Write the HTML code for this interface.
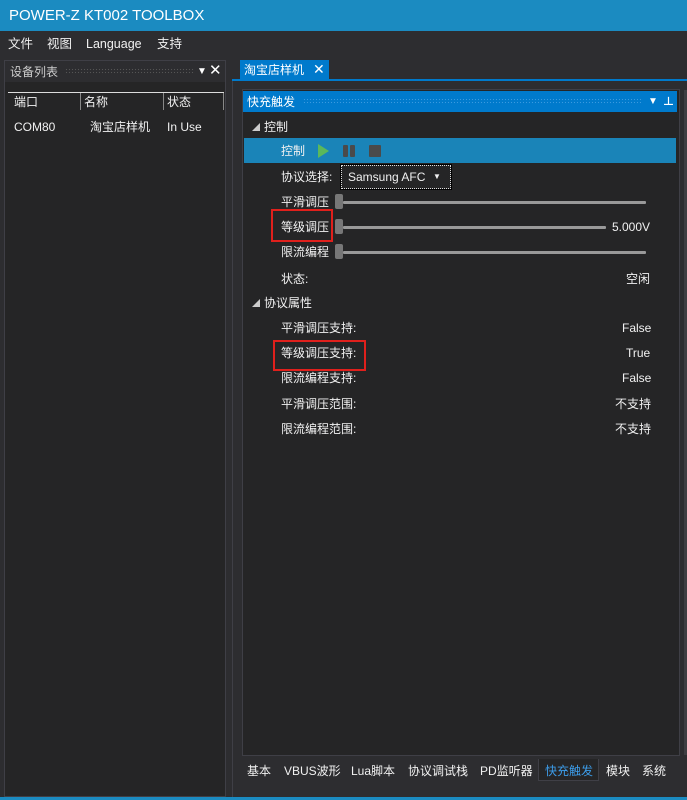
<!DOCTYPE html><html><head><meta charset="utf-8"><style>
*{margin:0;padding:0;box-sizing:border-box}
body{width:687px;height:800px;background:#2d2d30;position:relative;overflow:hidden;font-family:"Liberation Sans","Noto Sans CJK SC",sans-serif;font-size:12px;line-height:16px;color:#f1f1f1}
.a{position:absolute;white-space:nowrap}
.grip{background-image:radial-gradient(#555 0.6px,transparent 0.8px);background-size:3px 3px}
.gripb{background-image:radial-gradient(#3a9ae0 0.6px,transparent 0.8px);background-size:3px 3px}
.tr{position:absolute;height:3px;background:#999;border-radius:1px}
.th{position:absolute;width:8px;height:15px;background:#777;border-radius:2px}
</style></head><body>
<div class="a" style="left:0;top:0;width:687px;height:31px;background:#1b8bc1"></div>
<div class="a" style="left:9px;top:7px;font-size:15px;line-height:18px;color:#fff">POWER-Z KT002 TOOLBOX</div>
<div class="a" style="left:8px;top:36px;font-size:12.5px">文件</div>
<div class="a" style="left:47px;top:36px;font-size:12.5px">视图</div>
<div class="a" style="left:86px;top:36px;font-size:12.5px">Language</div>
<div class="a" style="left:157px;top:36px;font-size:12.5px">支持</div>
<!-- left panel -->
<div class="a" style="left:4px;top:60px;width:222px;height:737px;border:1px solid #3f3f46;background:#252526"></div>
<div class="a" style="left:5px;top:61px;width:220px;height:21px;background:#2d2d30"></div>
<div class="a" style="left:10px;top:64px;color:#ccc">设备列表</div>
<div class="a grip" style="left:65px;top:68px;width:130px;height:6px"></div>
<div class="a" style="left:197px;top:64px;font-size:10px;color:#fff">▼</div>
<div class="a" style="left:209px;top:63px;font-size:15px;color:#fff">✕</div>
<div class="a" style="left:8px;top:92px;width:216px;height:1px;background:#ddd"></div>
<div class="a" style="left:80px;top:93px;width:1px;height:17px;background:#888"></div>
<div class="a" style="left:163px;top:93px;width:1px;height:17px;background:#888"></div>
<div class="a" style="left:223px;top:93px;width:1px;height:17px;background:#888"></div>
<div class="a" style="left:14px;top:94px">端口</div>
<div class="a" style="left:84px;top:94px">名称</div>
<div class="a" style="left:167px;top:94px">状态</div>
<div class="a" style="left:14px;top:119px">COM80</div>
<div class="a" style="left:90px;top:119px">淘宝店样机</div>
<div class="a" style="left:167px;top:119px">In Use</div>
<!-- right -->
<div class="a" style="left:240px;top:60px;width:89px;height:20px;background:#007acc"></div>
<div class="a" style="left:244px;top:62px;color:#fff">淘宝店样机</div>
<div class="a" style="left:313px;top:61px;font-size:14px;color:#fff">✕</div>
<div class="a" style="left:232px;top:79px;width:455px;height:2px;background:#007acc"></div>
<div class="a" style="left:232px;top:81px;width:455px;height:716px;border-left:1px solid #3f3f46;background:#2d2d30"></div>
<div class="a" style="left:242px;top:89px;width:438px;height:667px;border:1px solid #3f3f46;background:#252526"></div>
<div class="a" style="left:684px;top:90px;width:3px;height:665px;background:#3e3e42"></div>
<div class="a" style="left:243px;top:91px;width:434px;height:21px;background:#007acc"></div>
<div class="a" style="left:247px;top:94px;color:#fff">快充触发</div>
<div class="a gripb" style="left:303px;top:98px;width:340px;height:6px"></div>
<div class="a" style="left:648px;top:94px;font-size:10px;color:#fff">▼</div>
<div class="a" style="left:663px;top:94px;font-size:11px;color:#fff;font-weight:bold">⊥</div>
<div class="a" style="left:252px;top:120px;font-size:8px;color:#ccc">◢</div>
<div class="a" style="left:264px;top:119px">控制</div>
<div class="a" style="left:244px;top:138px;width:432px;height:25px;background:#1a84b8"></div>
<div class="a" style="left:281px;top:143px">控制</div>
<svg class="a" style="left:317px;top:144px" width="66" height="14"><polygon points="1,0 12,7 1,14" fill="#5bb85b"/><rect x="26" y="1" width="5" height="12" rx="1" fill="#4a4a4a"/><rect x="33" y="1" width="5" height="12" rx="1" fill="#4a4a4a"/><rect x="52" y="1" width="12" height="12" rx="1" fill="#4a4a4a"/></svg>
<div class="a" style="left:281px;top:169px">协议选择:</div>
<div class="a" style="left:341px;top:165px;width:110px;height:24px;border:1px dotted #ddd;outline:1px solid #000"></div>
<div class="a" style="left:348px;top:169px">Samsung AFC</div>
<div class="a" style="left:433px;top:169px;font-size:8px">▼</div>
<div class="a" style="left:281px;top:194px">平滑调压</div>
<div class="tr" style="left:343px;top:201px;width:303px"></div><div class="th" style="left:335px;top:194px"></div>
<div class="a" style="left:281px;top:219px">等级调压</div>
<div class="tr" style="left:343px;top:226px;width:263px"></div><div class="th" style="left:335px;top:219px"></div>
<div class="a" style="left:612px;top:219px">5.000V</div>
<div class="a" style="left:281px;top:244px">限流编程</div>
<div class="tr" style="left:343px;top:251px;width:303px"></div><div class="th" style="left:335px;top:244px"></div>
<div class="a" style="left:281px;top:271px">状态:</div>
<div class="a" style="left:626px;top:271px">空闲</div>
<div class="a" style="left:252px;top:296px;font-size:8px;color:#ccc">◢</div>
<div class="a" style="left:264px;top:295px">协议属性</div>
<div class="a" style="left:281px;top:320px">平滑调压支持:</div><div class="a" style="left:622px;top:320px">False</div>
<div class="a" style="left:281px;top:345px">等级调压支持:</div><div class="a" style="left:626px;top:345px">True</div>
<div class="a" style="left:281px;top:370px">限流编程支持:</div><div class="a" style="left:622px;top:370px">False</div>
<div class="a" style="left:281px;top:396px">平滑调压范围:</div><div class="a" style="left:615px;top:396px">不支持</div>
<div class="a" style="left:281px;top:421px">限流编程范围:</div><div class="a" style="left:615px;top:421px">不支持</div>
<div class="a" style="left:271px;top:209px;width:62px;height:33px;border:2px solid #e0201c"></div>
<div class="a" style="left:273px;top:340px;width:93px;height:31px;border:2px solid #e0201c"></div>
<!-- bottom tabs -->
<div class="a" style="left:538px;top:759px;width:61px;height:22px;border:1px solid #3f3f46;border-top:none;background:#252526"></div>
<div class="a" style="left:247px;top:763px">基本</div>
<div class="a" style="left:284px;top:763px">VBUS波形</div>
<div class="a" style="left:351px;top:763px">Lua脚本</div>
<div class="a" style="left:408px;top:763px">协议调试栈</div>
<div class="a" style="left:480px;top:763px">PD监听器</div>
<div class="a" style="left:545px;top:763px;color:#3c9ce8">快充触发</div>
<div class="a" style="left:606px;top:763px">模块</div>
<div class="a" style="left:642px;top:763px">系统</div>
<div class="a" style="left:0;top:797px;width:687px;height:3px;background:#1b8bc1"></div>
</body></html>
